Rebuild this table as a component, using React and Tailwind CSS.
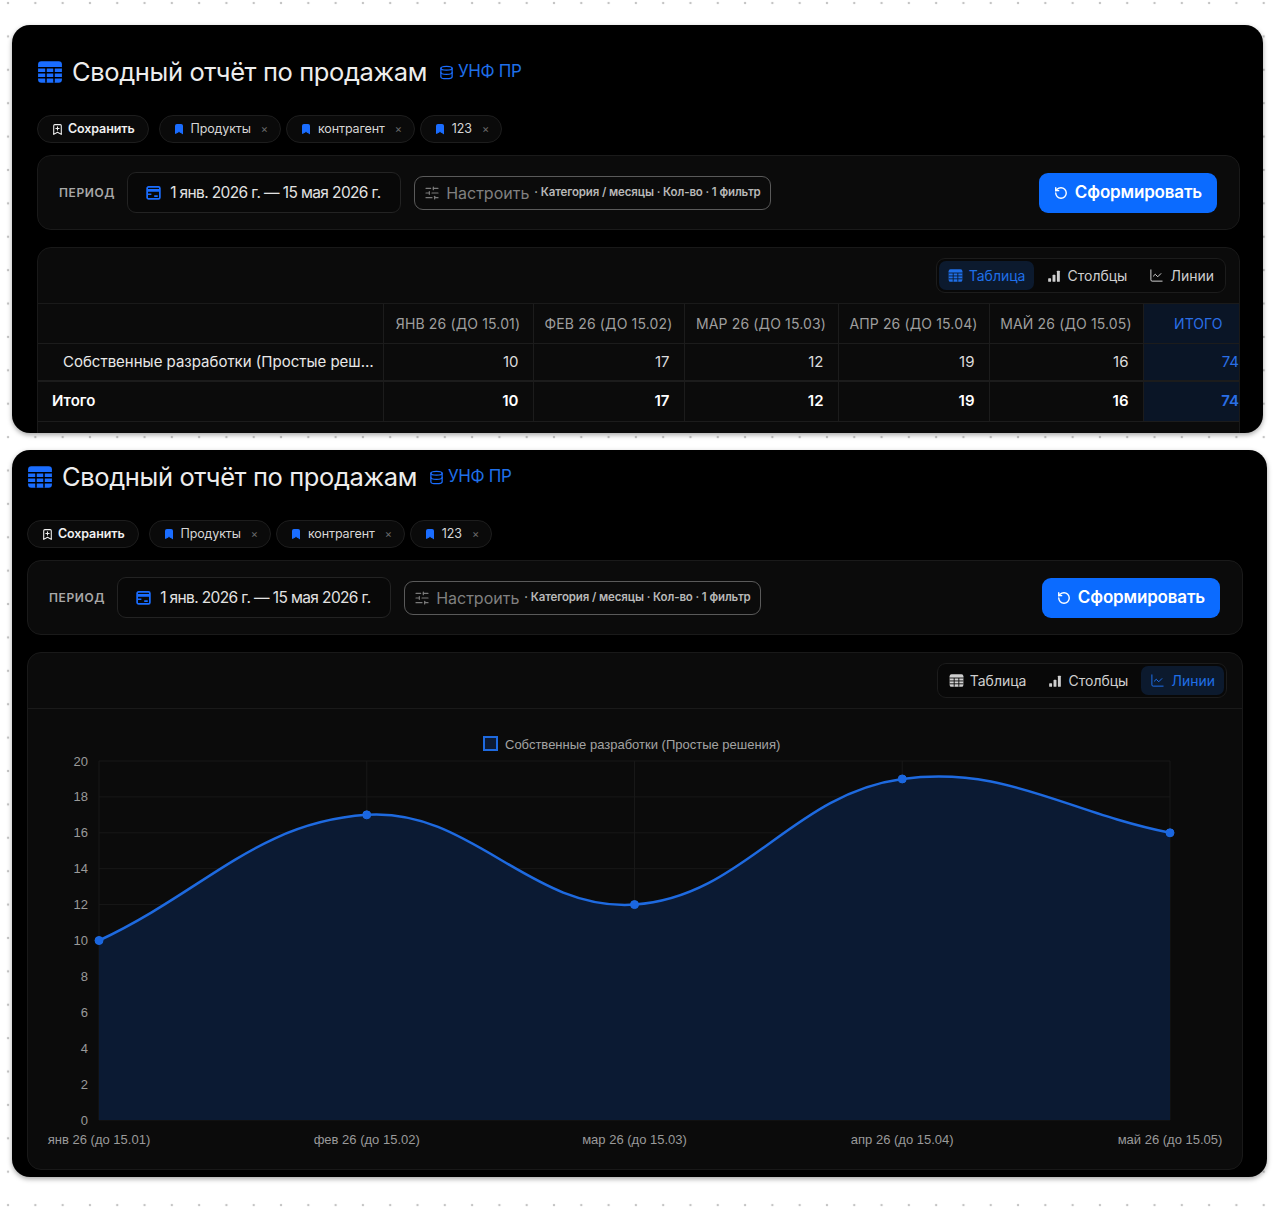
import { Database, BookmarkPlus, Bookmark, SlidersHorizontal, RotateCw, ChartLine } from 'lucide-react';

const months = ['ЯНВ 26 (ДО 15.01)', 'ФЕВ 26 (ДО 15.02)', 'МАР 26 (ДО 15.03)', 'АПР 26 (ДО 15.04)', 'МАЙ 26 (ДО 15.05)'];
const axisLabels = ['янв 26 (до 15.01)', 'фев 26 (до 15.02)', 'мар 26 (до 15.03)', 'апр 26 (до 15.04)', 'май 26 (до 15.05)'];
const values = [10, 17, 12, 19, 16];

function TableIcon({ size = 26, color = '#1a6dff', line = '#000' }) {
  return (
    <svg width={size} height={size} viewBox="0 0 24 24">
      <rect x="1" y="2" width="22" height="20" rx="3" fill={color} />
      <path d="M1 8h22M1 12.7h22M1 17.3h22M8.3 8v14M15.7 8v14" stroke={line} strokeWidth="1.4" />
    </svg>
  );
}

function BarsIcon({ color }) {
  return (
    <svg width="14" height="14" viewBox="0 0 24 24" fill={color}>
      <rect x="2" y="16" width="5" height="6" rx="1" />
      <rect x="9.5" y="10" width="5" height="12" rx="1" />
      <rect x="17" y="3" width="5" height="19" rx="1" />
    </svg>
  );
}

function CalendarIcon() {
  return (
    <svg width="17" height="17" viewBox="0 0 24 24" fill="none" stroke="#1a6dff" strokeWidth="2.4">
      <rect x="3" y="4" width="18" height="17" rx="2" />
      <path d="M3 9h18" strokeWidth="4" />
      <path d="M3 14.5h6M13 17h5" />
    </svg>
  );
}

function Chip({ children }) {
  return (
    <div className="flex h-[28px] items-center gap-[6px] rounded-full border border-[#1d1d1d] bg-[#0a0a0a] pl-[13px] pr-[12px] text-[12.5px] tracking-[-0.01em] text-[#d6d6d6]">
      <Bookmark size={12} fill="#1a6dff" stroke="#1a6dff" />
      <span>{children}</span>
      <span className="ml-[4px] text-[11px] text-[#6a6a6a]">×</span>
    </div>
  );
}

function Header() {
  return (
    <>
      <div className="flex h-[36px] items-center">
        <TableIcon />
        <h1 className="ml-[9px] text-[25.5px] leading-none font-normal tracking-[-0.015em] text-[#ededed]">Сводный отчёт по продажам</h1>
        <Database size={15} className="ml-[12px] text-[#1a6dff]" strokeWidth={2} />
        <span className="ml-[4px] text-[17px] text-[#1f6fe8] tracking-[-0.02em]">УНФ ПР</span>
      </div>
      <div className="mt-[25px] flex items-center gap-[5px]">
        <div className="mr-[5px] flex h-[28px] items-center gap-[4px] rounded-full border border-[#1d1d1d] bg-[#0a0a0a] px-[13px] text-[12.5px] font-semibold tracking-[-0.01em] text-[#f0f0f0]">
          <BookmarkPlus size={13} strokeWidth={2} />
          Сохранить
        </div>
        <Chip>Продукты</Chip>
        <Chip>контрагент</Chip>
        <Chip>123</Chip>
      </div>
    </>
  );
}

function PeriodBar() {
  return (
    <div className="mt-[12px] flex h-[75px] items-center rounded-[14px] border border-[#1a1a1a] bg-[#0b0b0b] pl-[21px] pr-[22px]">
      <span className="text-[12px] font-semibold tracking-[0.05em] text-[#a8a8a8]">ПЕРИОД</span>
      <div className="ml-[12px] flex h-[41px] w-[274px] items-center gap-[8px] rounded-[9px] border border-[#232323] bg-[#080808] pl-[17px]">
        <CalendarIcon />
        <span className="text-[15.5px] tracking-[-0.04em] text-[#e2e2e2]">1 янв. 2026 г. — 15 мая 2026 г.</span>
      </div>
      <div className="ml-[13px] flex h-[34px] items-center rounded-[9px] border border-[#5a5a5a] pl-[9px] pr-[9px]">
        <SlidersHorizontal size={16} className="text-[#7a7a7a]" strokeWidth={1.8} />
        <span className="ml-[6px] text-[16px] text-[#808080]">Настроить</span>
        <span className="ml-[5px] text-[11.5px] font-semibold tracking-[-0.01em] text-[#b8b8b8]">· Категория / месяцы · Кол-во · 1 фильтр</span>
      </div>
      <button className="ml-auto flex h-[40px] items-center gap-[7px] rounded-[9px] bg-[#0b6bff] px-[15px] text-[17px] font-semibold tracking-[-0.01em] text-white">
        <RotateCw size={14} strokeWidth={2.4} className="-scale-x-100" />
        Сформировать
      </button>
    </div>
  );
}

function ViewToggle({ active }) {
  const items = [
    { key: 'table', label: 'Таблица' },
    { key: 'bars', label: 'Столбцы' },
    { key: 'lines', label: 'Линии' },
  ];
  return (
    <div className="flex h-[35px] items-center gap-[4px] rounded-[9px] border border-[#1c1c1c] bg-[#080808] p-[2px]">
      {items.map((it) => {
        const on = it.key === active;
        const color = on ? '#1f6fe8' : '#cfcfcf';
        return (
          <div
            key={it.key}
            className={`flex h-full items-center gap-[6px] rounded-[7px] px-[9px] text-[14px] ${on ? 'bg-[#0c1a2e] text-[#1f6fe8]' : 'text-[#cfcfcf]'}`}
          >
            {it.key === 'table' && <TableIcon size={15} color={color} line={on ? '#0c1a2e' : '#080808'} />}
            {it.key === 'bars' && <BarsIcon color={color} />}
            {it.key === 'lines' && <ChartLine size={15} strokeWidth={1.6} />}
            {it.label}
          </div>
        );
      })}
    </div>
  );
}

function TableView() {
  const widths = ['w-[150px]', 'w-[151px]', 'w-[154px]', 'w-[151px]', 'w-[154px]'];
  return (
    <table className="w-[1215px] table-fixed border-collapse text-[15px]">
      <colgroup>
        <col className="w-[345px]" />
        {widths.map((w, i) => (
          <col key={i} className={w} />
        ))}
        <col className="w-[110px]" />
      </colgroup>
      <thead>
        <tr className="h-[39px] border-b border-[#1c1c1c]">
          <th className="border-r border-[#1c1c1c]" />
          {months.map((m) => (
            <th key={m} className="border-r border-[#1c1c1c] text-center text-[14px] font-normal tracking-[0.01em] text-[#9e9e9e]">
              {m}
            </th>
          ))}
          <th className="bg-[#0a1526] text-center text-[14px] font-normal text-[#2a6fe6]">ИТОГО</th>
        </tr>
      </thead>
      <tbody>
        <tr className="h-[38px] border-b-2 border-[#1c1c1c]">
          <td className="truncate border-r border-[#1c1c1c] pl-[25px] text-[#e8e8e8]">Собственные разработки (Простые реш…</td>
          {values.map((v, i) => (
            <td key={i} className="border-r border-[#1c1c1c] pr-[14px] text-right text-[#dcdcdc]">{v}</td>
          ))}
          <td className="bg-[#0a1526] pr-[14px] text-right text-[#2a6fe6]">74</td>
        </tr>
        <tr className="h-[40px] border-b border-[#1c1c1c] font-semibold">
          <td className="border-r border-[#1c1c1c] pl-[14px] text-white">Итого</td>
          {values.map((v, i) => (
            <td key={i} className="border-r border-[#1c1c1c] pr-[14px] text-right text-white">{v}</td>
          ))}
          <td className="bg-[#0a1526] pr-[14px] text-right text-[#2a6fe6]">74</td>
        </tr>
      </tbody>
    </table>
  );
}

function LineChartView() {
  const W = 1214;
  const H = 460;
  const left = 71;
  const right = 1142;
  const top = 52;
  const bottom = 411;
  const yFor = (v) => bottom - (v / 20) * (bottom - top);
  const dx = (right - left) / (values.length - 1);
  const pts = values.map((v, i) => ({ x: left + i * dx, y: yFor(v) }));
  const t = 0.4;
  const ctl = pts.map((cur, i) => {
    const prev = pts[i - 1] || cur;
    const next = pts[i + 1] || cur;
    const d01 = Math.hypot(cur.x - prev.x, cur.y - prev.y);
    const d12 = Math.hypot(next.x - cur.x, next.y - cur.y);
    const s01 = d01 / (d01 + d12) || 0;
    const s12 = d12 / (d01 + d12) || 0;
    return {
      inX: cur.x - t * s01 * (next.x - prev.x),
      inY: cur.y - t * s01 * (next.y - prev.y),
      outX: cur.x + t * s12 * (next.x - prev.x),
      outY: cur.y + t * s12 * (next.y - prev.y),
    };
  });
  let d = `M${pts[0].x},${pts[0].y}`;
  for (let i = 1; i < pts.length; i++) {
    d += ` C${ctl[i - 1].outX},${ctl[i - 1].outY} ${ctl[i].inX},${ctl[i].inY} ${pts[i].x},${pts[i].y}`;
  }
  const area = `${d} L${right},${bottom} L${left},${bottom} Z`;
  const ticks = [0, 2, 4, 6, 8, 10, 12, 14, 16, 18, 20];
  const font = '"Liberation Sans", Arial, sans-serif';

  return (
    <svg width={W} height={H} className="block">
      <rect x="456" y="28" width="13" height="13" fill="#0c1a33" stroke="#1e6ae0" strokeWidth="2" />
      <text x="477" y="40" fontSize="13" fill="#a3a3a3" fontFamily={font}>Собственные разработки (Простые решения)</text>
      {ticks.map((tk) => (
        <g key={tk}>
          <line x1={left} x2={right} y1={yFor(tk)} y2={yFor(tk)} stroke="#181818" strokeWidth="1" />
          <text x="60" y={yFor(tk) + 4.5} fontSize="13" fill="#9a9a9a" textAnchor="end" fontFamily={font}>{tk}</text>
        </g>
      ))}
      {pts.map((p, i) => (
        <line key={i} x1={p.x} x2={p.x} y1={top} y2={bottom} stroke="#181818" strokeWidth="1" />
      ))}
      <path d={area} fill="#0b1a33" />
      <path d={d} fill="none" stroke="#1e6ae0" strokeWidth="2.5" />
      {pts.map((p, i) => (
        <circle key={i} cx={p.x} cy={p.y} r="4" fill="#1a66e0" stroke="#1e6ae0" strokeWidth="1" />
      ))}
      {pts.map((p, i) => (
        <text key={i} x={p.x} y="435" fontSize="13" fill="#9a9a9a" textAnchor="middle" fontFamily={font}>{axisLabels[i]}</text>
      ))}
    </svg>
  );
}

export default function App() {
  return (
    <div className="min-h-[1212px] w-full bg-white bg-[radial-gradient(circle,#c4c4c4_1px,transparent_1.6px)] bg-[size:27.3px_33.4px] bg-[position:-5.6px_-13.7px] pt-[25px] pl-[12px] font-[Inter,'Noto_Sans',sans-serif]">
      {/* Table view */}
      <div className="h-[408px] w-[1251px] overflow-hidden rounded-[18px] bg-black pt-[29px] pl-[25px] pr-[23px] shadow-[0_2px_5px_rgba(0,0,0,0.35)]">
        <Header />
        <PeriodBar />
        <div className="mt-[17px] h-[200px] overflow-hidden rounded-[14px] border border-[#191919] bg-[#0b0b0b]">
          <div className="flex h-[56px] items-center justify-end border-b border-[#1a1a1a] pr-[13px]">
            <ViewToggle active="table" />
          </div>
          <TableView />
        </div>
      </div>

      {/* Chart view */}
      <div className="mt-[17px] w-[1255px] rounded-[18px] bg-black pt-[9px] pl-[15px] pr-[24px] pb-[7px] shadow-[0_2px_5px_rgba(0,0,0,0.35)]">
        <Header />
        <PeriodBar />
        <div className="mt-[17px] h-[518px] overflow-hidden rounded-[14px] border border-[#191919] bg-[#0b0b0b]">
          <div className="flex h-[56px] items-center justify-end border-b border-[#1a1a1a] pr-[15px]">
            <ViewToggle active="lines" />
          </div>
          <LineChartView />
        </div>
      </div>
    </div>
  );
}
